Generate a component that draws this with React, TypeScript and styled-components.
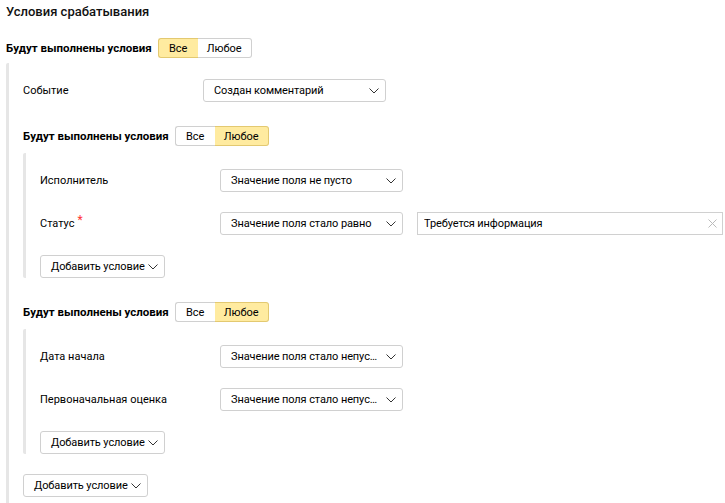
import React from "react";
import styled, { createGlobalStyle } from "styled-components";

const Global = createGlobalStyle`
  html, body { margin: 0; padding: 0; background: #fff; }
  body { font-family: Roboto, "Liberation Sans", Arial, sans-serif; color: #000; }
`;

const Page = styled.div`
  padding: 4px 0 0 6px;
  display: flex;
  flex-direction: column;
`;

const Title = styled.div`
  font-size: 13px;
  font-weight: 500;
  line-height: 16px;
  color: #111;
  margin-bottom: 18px;
`;

const Header = styled.div`
  display: flex;
  align-items: center;
  height: 20px;
  gap: 6px;
`;

const HeaderLabel = styled.span`
  font-size: 11.5px;
  font-weight: 700;
  color: #000;
`;

const Segment = styled.div`
  display: flex;
  height: 20px;
`;

const SegBtn = styled.button<{ $active?: boolean; $w: number; $first?: boolean }>`
  box-sizing: border-box;
  width: ${(p) => p.$w}px;
  height: 20px;
  padding: 0;
  font-family: inherit;
  font-size: 11px;
  color: #000;
  background: ${(p) => (p.$active ? "#ffeba0" : "#fff")};
  border: 1px solid ${(p) => (p.$active ? "#e3c971" : "#d0d0d0")};
  border-radius: ${(p) => (p.$first ? "3px 0 0 3px" : "0 3px 3px 0")};
  ${(p) => (p.$first ? "border-right: none;" : "border-left: none;")}
`;

const Body = styled.div<{ $pt: number }>`
  display: flex;
  flex-direction: column;
  border-left: 3px solid #e6e6e6;
  border-radius: 2px 0 0 2px;
  padding-top: ${(p) => p.$pt}px;
`;

const OuterBody = styled(Body)`
  margin-top: 5px;
  padding-left: 14px;
  gap: 24px;
  min-height: 440px;
`;

const InnerBody = styled(Body)`
  margin-top: 7px;
  padding-left: 14px;
  gap: 20px;
`;

const Group = styled.div`
  display: flex;
  flex-direction: column;
`;

const Row = styled.div`
  display: flex;
  align-items: center;
  height: 23px;
`;

const Label = styled.div`
  width: 180px;
  font-size: 11px;
  color: #000;
  flex-shrink: 0;
`;

const Star = styled.sup`
  color: #f33;
  font-size: 12px;
  margin-left: 3px;
  vertical-align: 3px;
  line-height: 0;
`;

const Select = styled.div`
  box-sizing: border-box;
  width: 183px;
  height: 23px;
  border: 1px solid #d0d0d0;
  border-radius: 3px;
  display: flex;
  align-items: center;
  padding: 0 6px 0 10px;
  font-size: 11px;
  letter-spacing: -0.1px;
  color: #000;
  gap: 5px;
`;

const SelectText = styled.span`
  flex: 1;
  white-space: nowrap;
  overflow: hidden;
  text-overflow: ellipsis;
`;

const Input = styled.div`
  box-sizing: border-box;
  margin-left: 14px;
  width: 306px;
  height: 23px;
  border: 1px solid #d0d0d0;
  display: flex;
  align-items: center;
  padding: 0 5px 0 6px;
  font-size: 11px;
  letter-spacing: -0.1px;
  color: #000;
`;

const AddBtn = styled.button<{ $pull?: boolean }>`
  box-sizing: border-box;
  align-self: flex-start;
  height: 23px;
  margin-top: ${(p) => (p.$pull ? "-4px" : "0")};
  padding: 0 6px 0 10px;
  border: 1px solid #d0d0d0;
  border-radius: 3px;
  background: #fff;
  font-family: inherit;
  font-size: 11px;
  letter-spacing: -0.1px;
  color: #000;
  display: flex;
  align-items: center;
  gap: 3px;
`;

const Chevron = () => (
  <svg width="10" height="6" viewBox="0 0 10 6" fill="none" style={{ flexShrink: 0 }}>
    <path d="M0.5 0.5 L5 5 L9.5 0.5" stroke="#333" strokeWidth="1" />
  </svg>
);

const Cross = () => (
  <svg width="9" height="9" viewBox="0 0 9 9" fill="none" style={{ flexShrink: 0 }}>
    <path d="M0.5 0.5 L8.5 8.5 M8.5 0.5 L0.5 8.5" stroke="#bbb" strokeWidth="1" />
  </svg>
);

const Mode = ({ any }: { any?: boolean }) => (
  <Header>
    <HeaderLabel>Будут выполнены условия</HeaderLabel>
    <Segment>
      <SegBtn $first $w={40} $active={!any}>Все</SegBtn>
      <SegBtn $w={54} $active={any}>Любое</SegBtn>
    </Segment>
  </Header>
);

const Field = ({ label, value, req, input }: { label: string; value: string; req?: boolean; input?: string }) => (
  <Row>
    <Label>
      {label}
      {req && <Star>*</Star>}
    </Label>
    <Select>
      <SelectText>{value}</SelectText>
      <Chevron />
    </Select>
    {input && (
      <Input>
        <SelectText>{input}</SelectText>
        <Cross />
      </Input>
    )}
  </Row>
);

const Add = ({ pull }: { pull?: boolean }) => (
  <AddBtn $pull={pull}>
    Добавить условие <Chevron />
  </AddBtn>
);

export default function App() {
  return (
    <>
      <Global />
      <Page>
        <Title>Условия срабатывания</Title>
        <Mode />
        <OuterBody $pt={16}>
          <Field label="Событие" value="Создан комментарий" />
          <Group>
            <Mode any />
            <InnerBody $pt={16}>
              <Field label="Исполнитель" value="Значение поля не пусто" />
              <Field label="Статус" value="Значение поля стало равно" req input="Требуется информация" />
              <Add />
            </InnerBody>
          </Group>
          <Group>
            <Mode any />
            <InnerBody $pt={16}>
              <Field label="Дата начала" value="Значение поля стало непустым" />
              <Field label="Первоначальная оценка" value="Значение поля стало непустым" />
              <Add />
            </InnerBody>
          </Group>
          <Add pull />
        </OuterBody>
      </Page>
    </>
  );
}
